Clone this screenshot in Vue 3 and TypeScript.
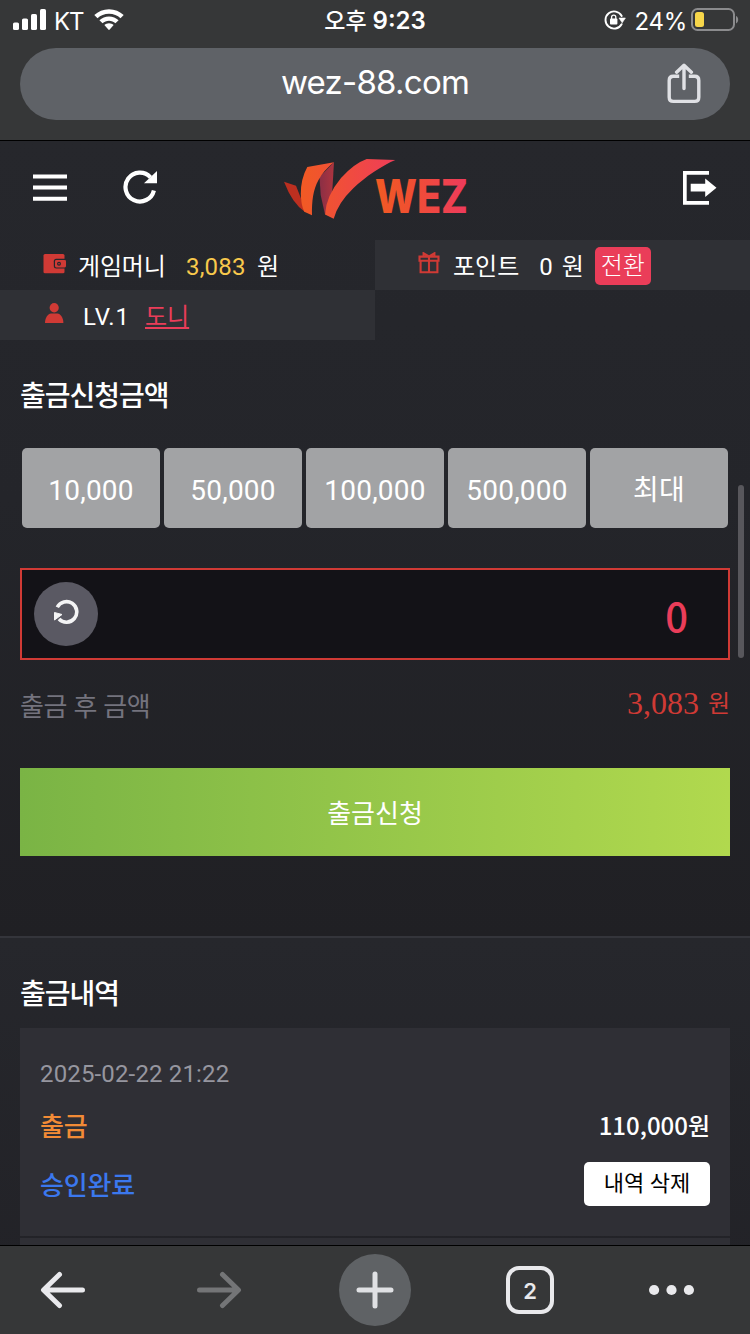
<script setup lang="ts">
interface Preset {
  label: string
  korean?: boolean
}

const presets: Preset[] = [
  { label: '10,000' },
  { label: '50,000' },
  { label: '100,000' },
  { label: '500,000' },
  { label: '최대', korean: true },
]
const balance = '3,083'
</script>

<template>
  <div class="phone">
    <header class="chrome-top">
      <div class="status">
        <div class="status-left">
          <svg width="34" height="22" viewBox="0 0 34 22" fill="#fff">
            <rect x="0" y="13.5" width="6" height="7.5" rx="1.6" />
            <rect x="9" y="9.5" width="6" height="11.5" rx="1.6" />
            <rect x="18" y="5" width="6" height="16" rx="1.6" />
            <rect x="27" y="0" width="6" height="21" rx="1.6" />
          </svg>
          <span class="carrier">KT</span>
          <svg class="wifi" width="30" height="22" viewBox="0 0 30 22" fill="#fff">
            <path d="M15 .3C20.700 .3 25.900 2.500 29.700 6.100L26.500 9.300C23.500 6.500 19.500 4.800 15 4.800S6.500 6.500 3.500 9.300L.3 6.100C4.100 2.500 9.300 .3 15 .3Z" />
            <path d="M15 7.400C18.700 7.400 22 8.800 24.600 11.200L21.400 14.300C19.700 12.700 17.500 11.800 15 11.800S10.300 12.700 8.600 14.300L5.400 11.200C8 8.800 11.300 7.400 15 7.400Z" />
            <path d="M15 14.300C16.800 14.300 18.400 15 19.600 16.100L15.700 20.600Q15 21.400 14.300 20.600L10.400 16.100C11.600 15 13.200 14.300 15 14.300Z" />
          </svg>
        </div>
        <div class="clock"><span class="ampm">오후</span><span class="time">9:23</span></div>
        <div class="status-right">
          <svg width="22" height="20" viewBox="0 0 22 20" fill="none">
            <path d="M17.700 6A8.600 8.600 0 1 0 17.600 14.200" stroke="#fff" stroke-width="1.900" stroke-linecap="round" />
            <path d="M15 8H21.400L18.200 12.800Z" fill="#fff" stroke="#fff" stroke-width=".6" stroke-linejoin="round" />
            <rect x="6" y="8.600" width="7.400" height="5.800" rx=".9" fill="#fff" />
            <path d="M7.600 9V7.200a2.100 2.100 0 0 1 4.200 0V9" stroke="#fff" stroke-width="1.300" />
          </svg>
          <span class="percent">24%</span>
          <svg class="battery" width="48" height="24" viewBox="0 0 48 24" fill="none">
            <rect x="1" y="1" width="42" height="21" rx="5.500" stroke="#8b8b8d" stroke-width="2" />
            <rect x="4" y="4" width="9" height="15" rx="2.500" fill="#f7d64a" />
            <path d="M45 8V15.400C47.900 14.200 47.900 9.200 45 8Z" fill="#8b8b8d" />
          </svg>
        </div>
      </div>
      <div class="url">
        <span class="url-text">wez-88.com</span>
        <svg class="share" width="34" height="42" viewBox="0 0 34 42" fill="none" stroke="#e0e1e5" stroke-width="3.400">
          <path d="M12.200 13.200H6.400Q2.200 13.200 2.200 17.400V34.200Q2.200 38.400 6.400 38.400H27.600Q31.800 38.400 31.800 34.200V17.400Q31.800 13.200 27.600 13.200H21.800" />
          <path d="M17 25.500V3M9.600 9.200L17 2.200L24.400 9.200" stroke-linecap="round" stroke-linejoin="round" />
        </svg>
      </div>
    </header>

    <main class="page">
      <section class="upper">
        <nav class="site-head">
          <svg class="menu" width="34" height="28" viewBox="0 0 34 28" fill="#fff">
            <path d="M0 .5H34V4.500H0ZM0 11.600H34V15.600H0ZM0 22.700H34V26.700H0Z" />
          </svg>
          <svg class="reload" width="35" height="35" viewBox="0 0 35 35">
            <path d="M30.900 20.400A14.400 14.400 0 1 1 27.500 7.300" fill="none" stroke="#fff" stroke-width="4.200" />
            <path d="M34 1V13.200H21Z" fill="#fff" />
          </svg>
          <svg class="logo" width="184" height="62" viewBox="0 0 184 62">
            <defs>
              <linearGradient id="wing" gradientUnits="userSpaceOnUse" x1="18" y1="0" x2="112" y2="0">
                <stop offset="0" stop-color="#f15a24" /><stop offset="1" stop-color="#ef3d59" />
              </linearGradient>
              <linearGradient id="word" gradientUnits="userSpaceOnUse" x1="92" y1="0" x2="182" y2="0">
                <stop offset="0" stop-color="#f15a24" /><stop offset=".35" stop-color="#f05030" /><stop offset="1" stop-color="#ed3b5c" />
              </linearGradient>
              <linearGradient id="fold" x1="0" y1="0" x2="1" y2="0">
                <stop offset="0" stop-color="#8a2f45" /><stop offset="1" stop-color="#ad343f" />
              </linearGradient>
            </defs>
            <path d="M0 22.700L12 26.700L18 42L21 53Q8 44 0 22.700Z" fill="#bc2f20" />
            <path d="M50 3.300L35.500 18L36.700 36L41 55.300L48 36Z" fill="url(#fold)" />
            <path d="M23.300 8L50 3.300Q40 11 34.500 21C29 31 27.800 42 28 56.300L20.300 52.700Q17 46 16.800 35Q16.700 20 23.300 8Z" fill="url(#wing)" />
            <path d="M82.700 0L111.300 1C98 6.500 81 18 69.300 29.300Q54 44 49.700 59.700L41 55.500Q42 37 57 19Q70 4.500 82.700 0Z" fill="url(#wing)" />
            <text class="wordmark" x="91" y="53.700" textLength="93" lengthAdjust="spacingAndGlyphs" fill="url(#word)">WEZ</text>
          </svg>
          <svg class="logout" width="34" height="35" viewBox="0 0 34 35" fill="#fff">
            <path d="M0 0H26V3.700H3.700V30H26V33.700H0Z" />
            <path d="M7.700 12.700H22.200V7.500L33.500 16.800L22.200 26V20.500H7.700Z" />
          </svg>
        </nav>

        <div class="info">
          <div class="cell">
            <svg class="wallet" width="24" height="20" viewBox="0 0 24 20">
              <path d="M2 0H20Q21.500 0 21.500 1.500V18Q21.500 19.200 20 19.200H2Q.5 19.200 .5 18V1.500Q.5 0 2 0Z" fill="#d03a35" />
              <rect x="10.800" y="4.800" width="14" height="9.800" rx="2.500" fill="#26272c" />
              <rect x="12" y="6" width="11" height="7.400" rx="1.300" fill="#d03a35" />
              <rect x="14" y="7.700" width="4" height="4" rx="2" fill="#26272c" />
              <circle cx="16" cy="9.700" r=".8" fill="#d03a35" />
            </svg>
            <span class="money-label">게임머니</span>
            <span class="money">{{ balance }}</span>
            <span class="won">원</span>
          </div>
          <div class="cell lit">
            <svg class="gift" width="22" height="22" viewBox="0 0 22 22" fill="none" stroke="#d03a35" stroke-width="2.100">
              <path d="M1.500 4.600H20.500V8.800H1.500ZM2.600 8.800H19.400V20.300H2.600ZM11 4.600V20.300M10.500 4.200L5.600 1.300V4.400M11.500 4.200L16.400 1.300V4.400" />
            </svg>
            <span class="point-label">포인트</span>
            <span class="point">0</span>
            <span class="point-won">원</span>
            <button class="convert">전환</button>
          </div>
          <div class="cell lit">
            <svg class="person" width="19" height="21" viewBox="0 0 19 21" fill="#d03a35">
              <ellipse cx="9.200" cy="4.800" rx="4.600" ry="4.700" />
              <path d="M0 20C0 15 3 10.600 6 10.600H12.400C15.400 10.600 18.400 15 18.400 20Z" />
            </svg>
            <span class="level">LV.1</span>
            <a class="nick">도니</a>
          </div>
        </div>

        <h2 class="heading">출금신청금액</h2>
        <div class="presets">
          <button v-for="p in presets" :key="p.label" :class="{ korean: p.korean }">{{ p.label }}</button>
        </div>
        <div class="amount">
          <span class="reset">
            <svg width="26" height="27" viewBox="0 0 26 27">
              <path d="M4.300 8.200A10.300 10.300 0 1 1 6 20" fill="none" stroke="#f4f4f5" stroke-width="3.600" />
              <path d="M1.500 13.500L9 15.500L1.500 21Z" fill="#f4f4f5" stroke="#f4f4f5" stroke-linejoin="round" />
            </svg>
          </span>
          <span class="amount-value">0</span>
        </div>
        <div class="after">
          <span class="after-label">출금 후 금액</span>
          <span class="after-value"><span class="after-num">{{ balance }}</span><span class="after-won">원</span></span>
        </div>
        <button class="submit">출금신청</button>
      </section>

      <section class="history">
        <h2 class="heading">출금내역</h2>
        <article class="record">
          <div class="date">2025-02-22 21:22</div>
          <div class="line kind"><b>출금</b><strong>110,000원</strong></div>
          <div class="line state"><b>승인완료</b><button>내역 삭제</button></div>
        </article>
        <article class="record next"></article>
      </section>
      <i class="scrollbar"></i>
    </main>

    <footer class="toolbar">
      <svg class="back" width="46" height="38" viewBox="0 0 46 38" fill="none" stroke="#e9e9ec" stroke-width="5" stroke-linecap="round" stroke-linejoin="round">
        <path d="M42.500 19H4M19.500 3.500L3.500 19L19.500 34.500" />
      </svg>
      <svg class="forward" width="46" height="38" viewBox="0 0 46 38" fill="none" stroke="#747577" stroke-width="5" stroke-linecap="round" stroke-linejoin="round">
        <path d="M3.500 19H42M26.500 3.500L42.500 19L26.500 34.500" />
      </svg>
      <span class="plus">
        <svg width="38" height="38" viewBox="0 0 38 38" stroke="#e0e1e4" stroke-width="5" stroke-linecap="round">
          <path d="M3 19H35M19 3V35" />
        </svg>
      </span>
      <span class="tabs">2</span>
      <svg class="dots" width="46" height="12" viewBox="0 0 46 12" fill="#e9e9ec">
        <circle cx="5.100" cy="6" r="5.100" /><circle cx="22.500" cy="6" r="5.100" /><circle cx="39.900" cy="6" r="5.100" />
      </svg>
    </footer>
  </div>
</template>

<style>
body {
  background: #26272c;
}
</style>

<style scoped>
.phone,
.phone * {
  box-sizing: border-box;
}
.phone {
  width: 750px;
  height: 1334px;
  overflow: hidden;
  display: flex;
  flex-direction: column;
  font-family: Roboto, "Noto Sans CJK KR", sans-serif;
  color: #fff;
}
.phone svg {
  display: block;
  flex: none;
}
.phone span,
.phone a,
.phone button {
  white-space: nowrap;
}
.phone button {
  border: 0;
  padding: 0;
  color: #fff;
  font-family: inherit;
}
.chrome-top {
  flex: none;
  height: 141px;
  background: #363738;
  border-bottom: 1px solid #000;
}
.status {
  height: 48px;
  display: grid;
  grid-template-columns: 250px 250px 250px;
  font-family: Inter, "Noto Sans CJK KR", sans-serif;
}
.status-left {
  display: flex;
  align-items: flex-start;
  padding: 9px 0 0 13px;
}
.carrier {
  width: 32px;
  margin-left: 7px;
  margin-top: -2px;
  font-size: 24px;
  line-height: 29px;
  letter-spacing: -1.1px;
}
.wifi {
  margin-left: 8px;
}
.clock {
  display: flex;
  justify-content: center;
  line-height: 42px;
  height: 42px;
}
.ampm {
  font-weight: 500;
  font-size: 23px;
  margin-right: 6px;
}
.time {
  font-weight: 600;
  font-size: 24px;
}
.status-right {
  display: flex;
  align-items: flex-start;
  justify-content: flex-end;
  padding: 8px 11px 0 0;
}
.status-right > svg:first-child {
  margin-top: 2px;
}
.percent {
  font-size: 24px;
  line-height: 29px;
  letter-spacing: -0.3px;
  margin: -1px 4px 0 9px;
}
.url {
  position: relative;
  margin: 0 20px;
  height: 72px;
  border-radius: 36px;
  background: #5f6267;
  display: flex;
  justify-content: center;
}
.url-text {
  font: 400 33px/69px Inter, sans-serif;
  letter-spacing: -0.75px;
}
.share {
  position: absolute;
  left: 647px;
  top: 15px;
}
.page {
  position: relative;
  flex: 1;
  overflow: hidden;
  display: flex;
  flex-direction: column;
}
.upper {
  flex: none;
  height: 797px;
  background: linear-gradient(#26272c, #24252a 45%, #202024);
  border-bottom: 2px solid #34353b;
}
.site-head {
  height: 99px;
  display: flex;
  align-items: flex-start;
}
.menu {
  margin: 33px 0 0 33px;
}
.reload {
  margin: 29px 0 0 56px;
}
.logo {
  margin: 18px 0 0 126px;
  overflow: visible;
}
.wordmark {
  font: 800 46px Inter, sans-serif;
}
.logout {
  margin: 30px 0 0 215px;
}
.info {
  display: grid;
  grid-template-columns: 375px 375px;
  grid-auto-rows: 50px;
  font-size: 24px;
}
.cell {
  display: flex;
  line-height: 54px;
}
.lit {
  background: #2f3035;
}
.wallet {
  margin: 14px 0 0 43px;
}
.money-label {
  width: 88px;
  margin-left: 11px;
  letter-spacing: -0.2px;
}
.money {
  width: 60px;
  margin-left: 20px;
  color: #f8c94c;
  letter-spacing: 0.2px;
}
.won {
  margin-left: 11px;
}
.gift {
  margin: 12px 0 0 43px;
}
.point-label {
  margin-left: 13px;
}
.point {
  margin-left: 20px;
}
.point-won {
  margin-left: 9px;
}
.phone .convert {
  margin: 7px 0 0 11px;
  width: 56px;
  height: 38px;
  border-radius: 5px;
  background: #ea3d59;
  font: 300 24px/39px Roboto, "Noto Sans CJK KR", sans-serif;
}
.person {
  margin: 13px 0 0 45px;
}
.level {
  margin-left: 19px;
  width: 45px;
  letter-spacing: 0.9px;
}
.nick {
  height: 46px;
  margin-left: 17px;
  color: #ea3d59;
  text-decoration: underline;
  text-decoration-thickness: 2px;
  text-underline-offset: 2px;
}
.heading {
  margin: 0 0 0 20px;
  font-size: 28px;
  font-weight: 500;
  letter-spacing: -1px;
  line-height: 42px;
}
.upper .heading {
  margin-top: 36px;
}
.presets {
  margin: 30px 22px 0;
  display: grid;
  grid-template-columns: repeat(5, 1fr);
  gap: 4px;
}
.presets button {
  height: 80px;
  border-radius: 5px;
  background: #a2a3a5;
  font-size: 28px;
  line-height: 86px;
  letter-spacing: 0.2px;
}
.presets .korean {
  line-height: 86px;
}
.amount {
  margin: 40px 20px 0;
  height: 92px;
  border: 2px solid #d03a35;
  background: #131217;
  display: flex;
  justify-content: space-between;
  padding: 12px 40px 0 12px;
}
.reset {
  width: 64px;
  height: 64px;
  border-radius: 50%;
  background: #5a5963;
  padding: 17px 0 0 19px;
}
.reset svg {
  filter: blur(0.4px);
}
.amount-value {
  font: 500 40px/66px "Noto Sans CJK KR", sans-serif;
  color: #ea3d59;
}
.after {
  margin: 24px 20px 0;
  height: 40px;
  display: flex;
  justify-content: space-between;
}
.after-label {
  color: #74737e;
  font-size: 26px;
  line-height: 46px;
  letter-spacing: -0.3px;
}
.after-value {
  color: #d03a35;
  display: flex;
}
.after-num {
  font: 32px/39px "Liberation Serif", serif;
}
.after-won {
  margin-left: 9px;
  font-size: 24px;
  line-height: 41px;
}
.submit {
  display: block;
  margin: 44px 20px 0;
  width: 710px;
  height: 88px;
  background: linear-gradient(90deg, #7ab445, #b1d94e);
  font-size: 26px;
  line-height: 92px;
}
.history {
  flex: 1;
  background: linear-gradient(#26272c, #222227);
}
.history .heading {
  padding-top: 36px;
}
.record {
  margin: 12px 20px 0;
  height: 208px;
  padding: 25px 20px 0;
  background: #2f2f35;
}
.record.next {
  margin-top: 2px;
  height: 60px;
}
.date {
  color: #96969f;
  font-size: 24px;
  line-height: 42px;
  letter-spacing: 0.15px;
}
.line {
  display: flex;
  justify-content: space-between;
}
.line b {
  font-size: 26px;
  font-weight: 500;
  letter-spacing: -0.2px;
}
.kind {
  height: 67px;
  line-height: 64px;
}
.kind b {
  color: #f28b36;
}
.kind strong {
  font: 500 24px/59px "Noto Sans CJK KR", sans-serif;
}
.state b {
  color: #3b78ee;
  line-height: 48px;
}
.phone .state button {
  width: 126px;
  height: 44px;
  border-radius: 5px;
  background: #fff;
  color: #000;
  font-size: 22px;
  line-height: 38px;
}
.scrollbar {
  position: absolute;
  right: 6px;
  top: 344px;
  width: 6px;
  height: 173px;
  border-radius: 3px;
  background: #58575c;
}
.toolbar {
  flex: none;
  height: 89px;
  border-top: 1px solid #000;
  background: #363738;
  display: flex;
  align-items: center;
}
.back {
  margin-left: 40px;
}
.forward {
  margin-left: 110px;
}
.plus {
  width: 72px;
  height: 72px;
  margin-left: 97px;
  border-radius: 50%;
  background: #5f6265;
  display: grid;
  place-items: center;
}
.tabs {
  width: 48px;
  height: 48px;
  margin-left: 95px;
  border: 4px solid #e9e9ec;
  border-radius: 13px;
  color: #e9e9ec;
  font: 600 22px/42px Inter, sans-serif;
  text-align: center;
}
.dots {
  margin-left: 95px;
}
</style>
